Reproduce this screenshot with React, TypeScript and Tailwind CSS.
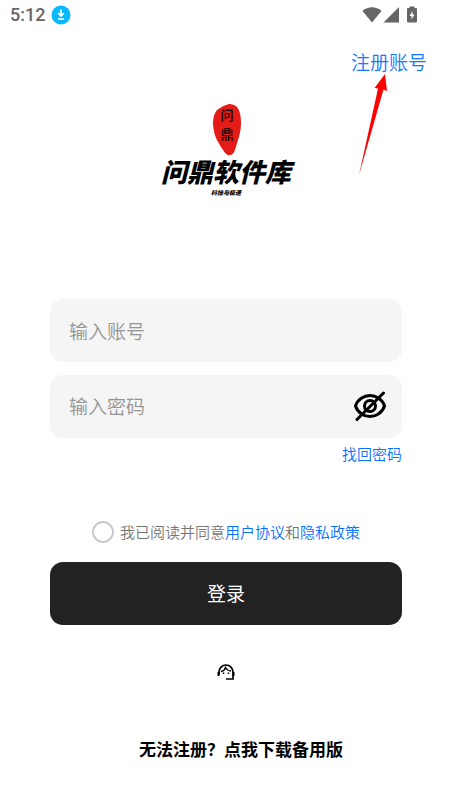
import React, { useState } from "react";

const CJK = "font-['Noto_Sans_CJK_SC',sans-serif]";

function StatusBar() {
  return (
    <header className="flex h-[30px] items-center justify-between pl-[10px] pr-[34px] text-[#666666]">
      <div className="flex items-center gap-[6px]">
        <time className="font-['Roboto',sans-serif] text-[18px] font-medium leading-[30px]">5:12</time>
        <svg width="20" height="20" viewBox="0 0 20 20" aria-hidden="true">
          <circle cx="10" cy="10" r="9.5" fill="#08b9ff" />
          <path d="M10 4.500v6M7 8l3 3 3-3M7 14h6" fill="none" stroke="#fff" strokeWidth="1.7" />
        </svg>
      </div>
      <div className="flex items-center">
        <svg width="20" height="18" viewBox="0 0 20 18" aria-hidden="true">
          <path d="M0.5 5C6 0 14 0 19.500 5L10 16.500Z" fill="currentColor" />
        </svg>
        <svg width="18" height="18" viewBox="0 0 18 18" aria-hidden="true">
          <path d="M17 1v15.500H1.500Z" fill="currentColor" />
        </svg>
        <svg className="ml-[6px]" width="12" height="18" viewBox="0 0 12 18" aria-hidden="true">
          <path d="M3.500 0.500h5v1.500H10q1 0 1 1V15.500q0 1-1 1H2q-1 0-1-1V3q0-1 1-1h1.500Z" fill="currentColor" />
          <path d="M6.500 5 3.500 10h2V13.500l3-5h-2Z" fill="#fff" />
        </svg>
      </div>
    </header>
  );
}

function Logo() {
  return (
    <div className="flex flex-col items-center text-black">
      <svg width="30" height="52" viewBox="0 0 30 52" overflow="visible" aria-label="问鼎">
        <path
          d="M18 2C21 2 24 3 26 5C29 9 30 14 30 21C30 29 28 35 26 41C24 48 23 53 19 53C15 54 13 49 10 45C7 39 4 36 3 29C1 21 2 13 6 8C10 5 14 3 18 2Z"
          fill="#e41b17"
        />
        <g className={CJK} fontSize="13" fontWeight="500" textAnchor="middle">
          <text x="16" y="18">问</text>
          <text x="16" y="37">鼎</text>
        </g>
      </svg>
      <h1 className="text-[26px] font-black italic leading-[34px]">问鼎软件库</h1>
      <p className="text-[6px] font-black italic leading-[10px]">科技与极速</p>
    </div>
  );
}

function EyeOff() {
  return (
    <svg width="34" height="32" viewBox="0 0 34 32" fill="none" stroke="#000" strokeWidth="3" strokeLinecap="round" aria-hidden="true">
      <path d="M2.500 15C4.500 8.500 11 4.500 17 4.500S29.500 8.500 31.500 15C29.500 21.500 23 25.500 17 25.500S4.500 21.500 2.500 15Z" />
      <circle cx="17" cy="15" r="5.500" />
      <path d="M4 28.500 30.500 2" />
    </svg>
  );
}

export default function App() {
  const [visible, setVisible] = useState(false);
  return (
    <div className={`relative w-full bg-white font-[350] ${CJK}`}>
      <StatusBar />
      <div className="flex justify-end pr-[25px] pt-[18px]">
        <a href="#register" className="text-[19px] leading-[28px] text-[#1677ff]">注册账号</a>
      </div>
      <svg className="absolute right-[62px] top-[74px]" width="32" height="102" viewBox="0 0 32 102" aria-hidden="true">
        <path d="M27 0 29 17 25.500 15.500 1 101 20 14.500 16.500 14Z" fill="#ff0000" />
      </svg>
      <div className="pt-[26px]">
        <Logo />
      </div>
      <form className="flex flex-col px-[50px] pt-[101px]" onSubmit={(e) => e.preventDefault()}>
        <input
          aria-label="输入账号"
          placeholder="输入账号"
          className="h-[63px] w-full rounded-[13px] bg-[#f5f5f5] px-[19px] text-[19px] outline-none placeholder:text-[#949494]"
        />
        <div className="mt-[13px] flex h-[63px] items-center rounded-[13px] bg-[#f5f5f5] pl-[19px] pr-[15px]">
          <input
            type={visible ? "text" : "password"}
            aria-label="输入密码"
            placeholder="输入密码"
            className="min-w-0 flex-1 bg-transparent text-[19px] outline-none placeholder:text-[#949494]"
          />
          <button type="button" aria-label="显示密码" onClick={() => setVisible(!visible)}>
            <EyeOff />
          </button>
        </div>
        <a href="#recover" className="mt-[5px] self-end text-[15px] leading-[22px] text-[#0a70ff]">找回密码</a>
        <div className="mt-[56px] flex items-center justify-center gap-[6px] text-[15px] leading-[22px] text-[#757575]">
          <input
            id="agree"
            type="checkbox"
            className="size-[22px] appearance-none rounded-full border-2 border-[#c8cacd] checked:bg-[#1677ff]"
          />
          <label htmlFor="agree">
            我已阅读并同意<a href="#terms" className="text-[#0a70ff]">用户协议</a>和<a href="#privacy" className="text-[#0a70ff]">隐私政策</a>
          </label>
        </div>
        <button type="submit" className="mt-[19px] h-[63px] w-full rounded-[13px] bg-[#222222] text-[19px] font-normal text-white">
          登录
        </button>
      </form>
      <div className="flex justify-center pt-[38px]">
        <button type="button" aria-label="客服">
          <svg width="18" height="18" viewBox="0 0 18 18" fill="none" stroke="#000" strokeWidth="1.700" aria-hidden="true">
            <path d="M2 12V9a7 7 0 0 1 14 0V16H9" />
            <path d="M1.500 9v4M16.500 9v4" strokeWidth="2" />
            <path d="M4 8.500C6.500 8 8 6.500 8.500 4.500C10 7 12 8 14 8" strokeWidth="1.300" />
            <path d="M6.500 9.500v1.500M11.500 9.500v1.500" strokeWidth="1.500" />
          </svg>
        </button>
      </div>
      <div className="flex justify-center pb-[42px] pl-[30px] pt-[55px]">
        <a href="#backup" className="text-[17px] font-bold leading-[26px] text-black">无法注册？点我下载备用版</a>
      </div>
    </div>
  );
}
